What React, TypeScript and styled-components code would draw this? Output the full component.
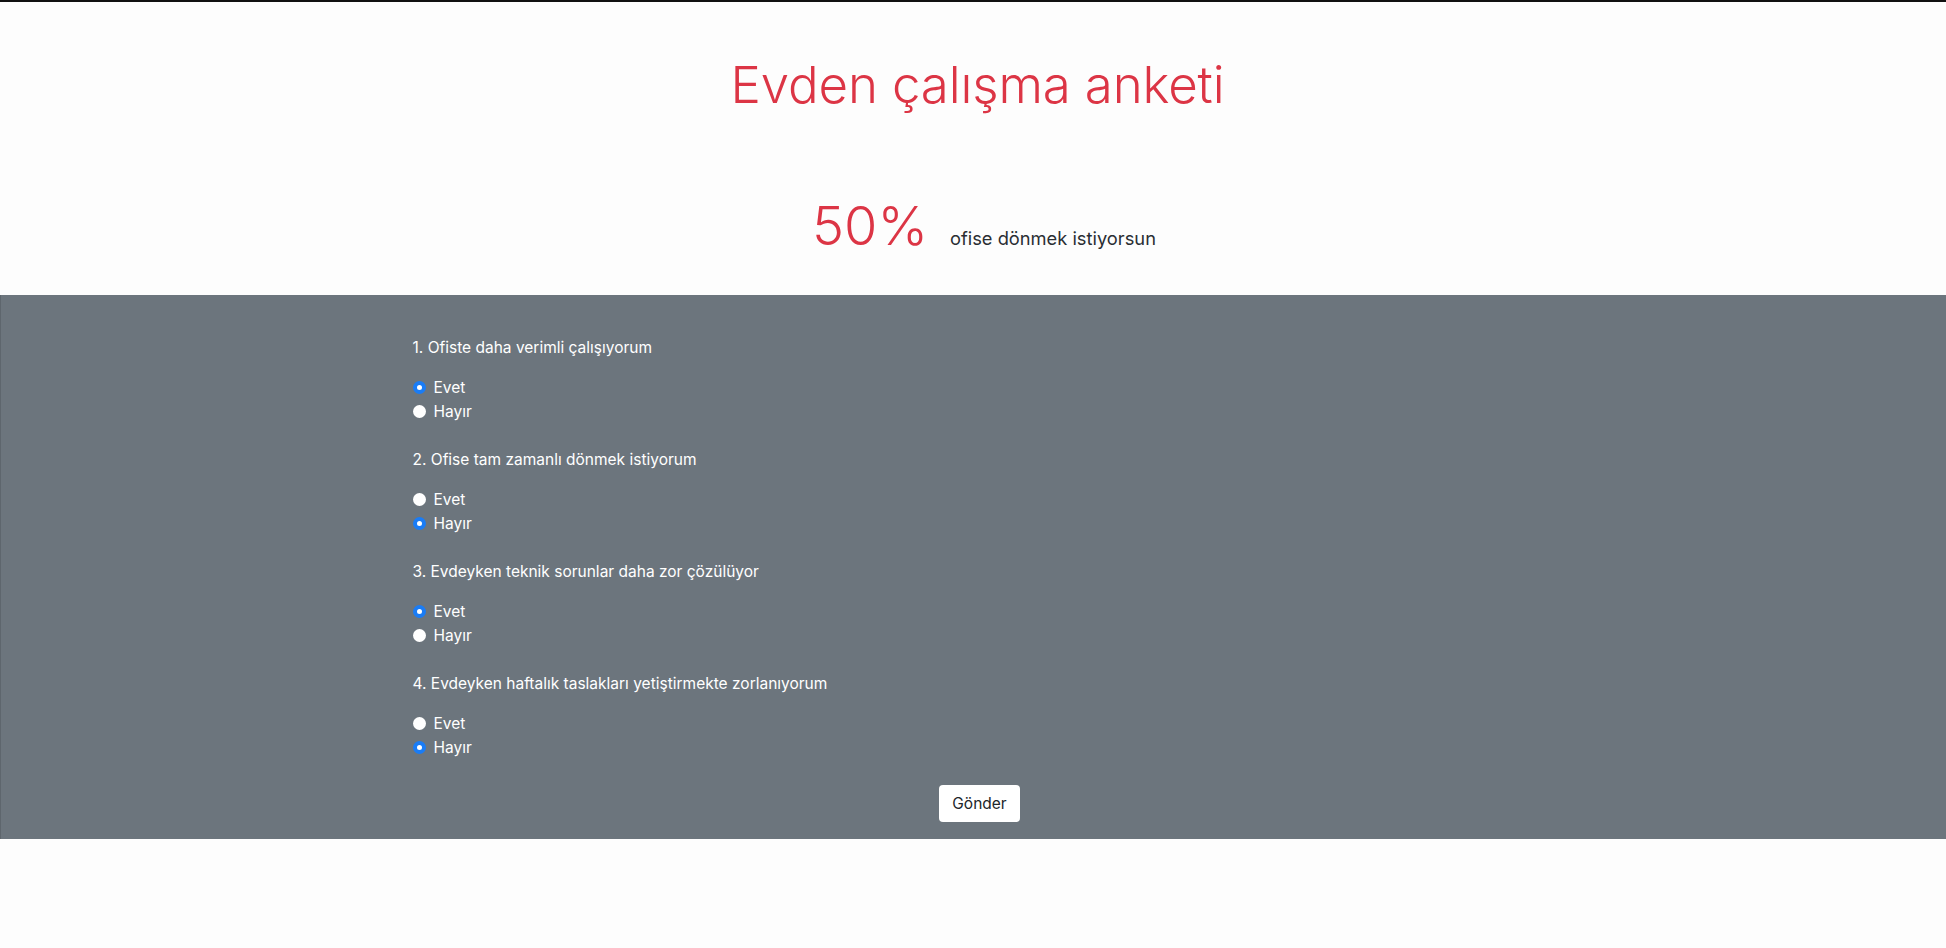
import React, { useState } from 'react';
import styled, { createGlobalStyle } from 'styled-components';

const GlobalStyle = createGlobalStyle`
    html, body {
        margin: 0;
        padding: 0;
        background: #fdfdfd;
    }
    body {
        font-family: Inter, "Noto Sans", "Liberation Sans", sans-serif;
        color: #212529;
        border-top: 2px solid #111;
    }
`;

const Header = styled.header`
    display: flex;
    flex-direction: column;
    align-items: center;
    padding-top: 53px;
    height: 293px;
    box-sizing: border-box;
`;

const Title = styled.h1`
    margin: 0;
    padding-left: 9px;
    font-size: 51px;
    font-weight: 300;
    line-height: 60px;
    color: #dc3545;
    letter-spacing: -0.15px;
`;

const Result = styled.div`
    display: flex;
    align-items: baseline;
    gap: 22px;
    margin-top: 79px;
    padding-left: 22px;
`;

const Percent = styled.span`
    font-size: 54px;
    font-weight: 300;
    line-height: 64px;
    color: #dc3545;
`;

const Caption = styled.span`
    font-size: 18.3px;
    color: #2a2e33;
`;

const Section = styled.section`
    background: #6c757d;
    border-left: 1px solid #5e666d;
    padding: 41px 0 17px;
`;

const Container = styled.form`
    width: 1122px;
    margin: 0 auto;
    display: flex;
    flex-direction: column;
`;

const Question = styled.fieldset`
    border: 0;
    margin: 0 0 25px;
    padding: 0;
`;

const Label = styled.legend`
    padding: 0;
    margin-bottom: 16px;
    font-size: 15.5px;
    line-height: 24px;
    color: #fff;
`;

const Option = styled.label`
    display: flex;
    align-items: center;
    gap: 8px;
    height: 23.5px;
    font-size: 15.5px;
    color: #fff;
    cursor: pointer;
`;

const Radio = styled.input.attrs({ type: 'radio' })`
    appearance: none;
    margin: 0;
    width: 13px;
    height: 13px;
    border-radius: 50%;
    background: #fff;
    box-sizing: border-box;

    &:checked {
        background: #fff;
        border: 4px solid #1a7cf5;
    }
`;

const Submit = styled.button`
    align-self: center;
    margin-top: 1px;
    margin-left: 12px;
    width: 81px;
    height: 37px;
    border: 0;
    border-radius: 4px;
    background: #fff;
    color: #212529;
    font-family: inherit;
    font-size: 15.5px;
    cursor: pointer;
`;

const questions = [
    { text: '1. Ofiste daha verimli çalışıyorum', answer: 'evet' },
    { text: '2. Ofise tam zamanlı dönmek istiyorum', answer: 'hayir' },
    { text: '3. Evdeyken teknik sorunlar daha zor çözülüyor', answer: 'evet' },
    { text: '4. Evdeyken haftalık taslakları yetiştirmekte zorlanıyorum', answer: 'hayir' },
];

export default function App() {
    const [ answers, setAnswers ] = useState(questions.map(q => q.answer));

    const pick = (i: number, value: string) => {
        setAnswers(prev => prev.map((a, j) => (j === i ? value : a)));
    };

    const percent = Math.round((answers.filter((a, i) => (i % 2 === 0 ? a === 'evet' : a === 'hayir')).length / answers.length) * 50);

    return (
        <>
            <GlobalStyle/>
            <Header>
                <Title>Evden çalışma anketi</Title>
                <Result>
                    <Percent>{percent}%</Percent>
                    <Caption>ofise dönmek istiyorsun</Caption>
                </Result>
            </Header>
            <Section>
                <Container onSubmit={e => e.preventDefault()}>
                    {questions.map((q, i) => (
                        <Question key={i}>
                            <Label>{q.text}</Label>
                            <Option>
                                <Radio
                                    name={'q' + i}
                                    checked={answers[i] === 'evet'}
                                    onChange={() => pick(i, 'evet')}
                                />
                                Evet
                            </Option>
                            <Option>
                                <Radio
                                    name={'q' + i}
                                    checked={answers[i] === 'hayir'}
                                    onChange={() => pick(i, 'hayir')}
                                />
                                Hayır
                            </Option>
                        </Question>
                    ))}
                    <Submit type={'submit'}>Gönder</Submit>
                </Container>
            </Section>
        </>
    );
}
